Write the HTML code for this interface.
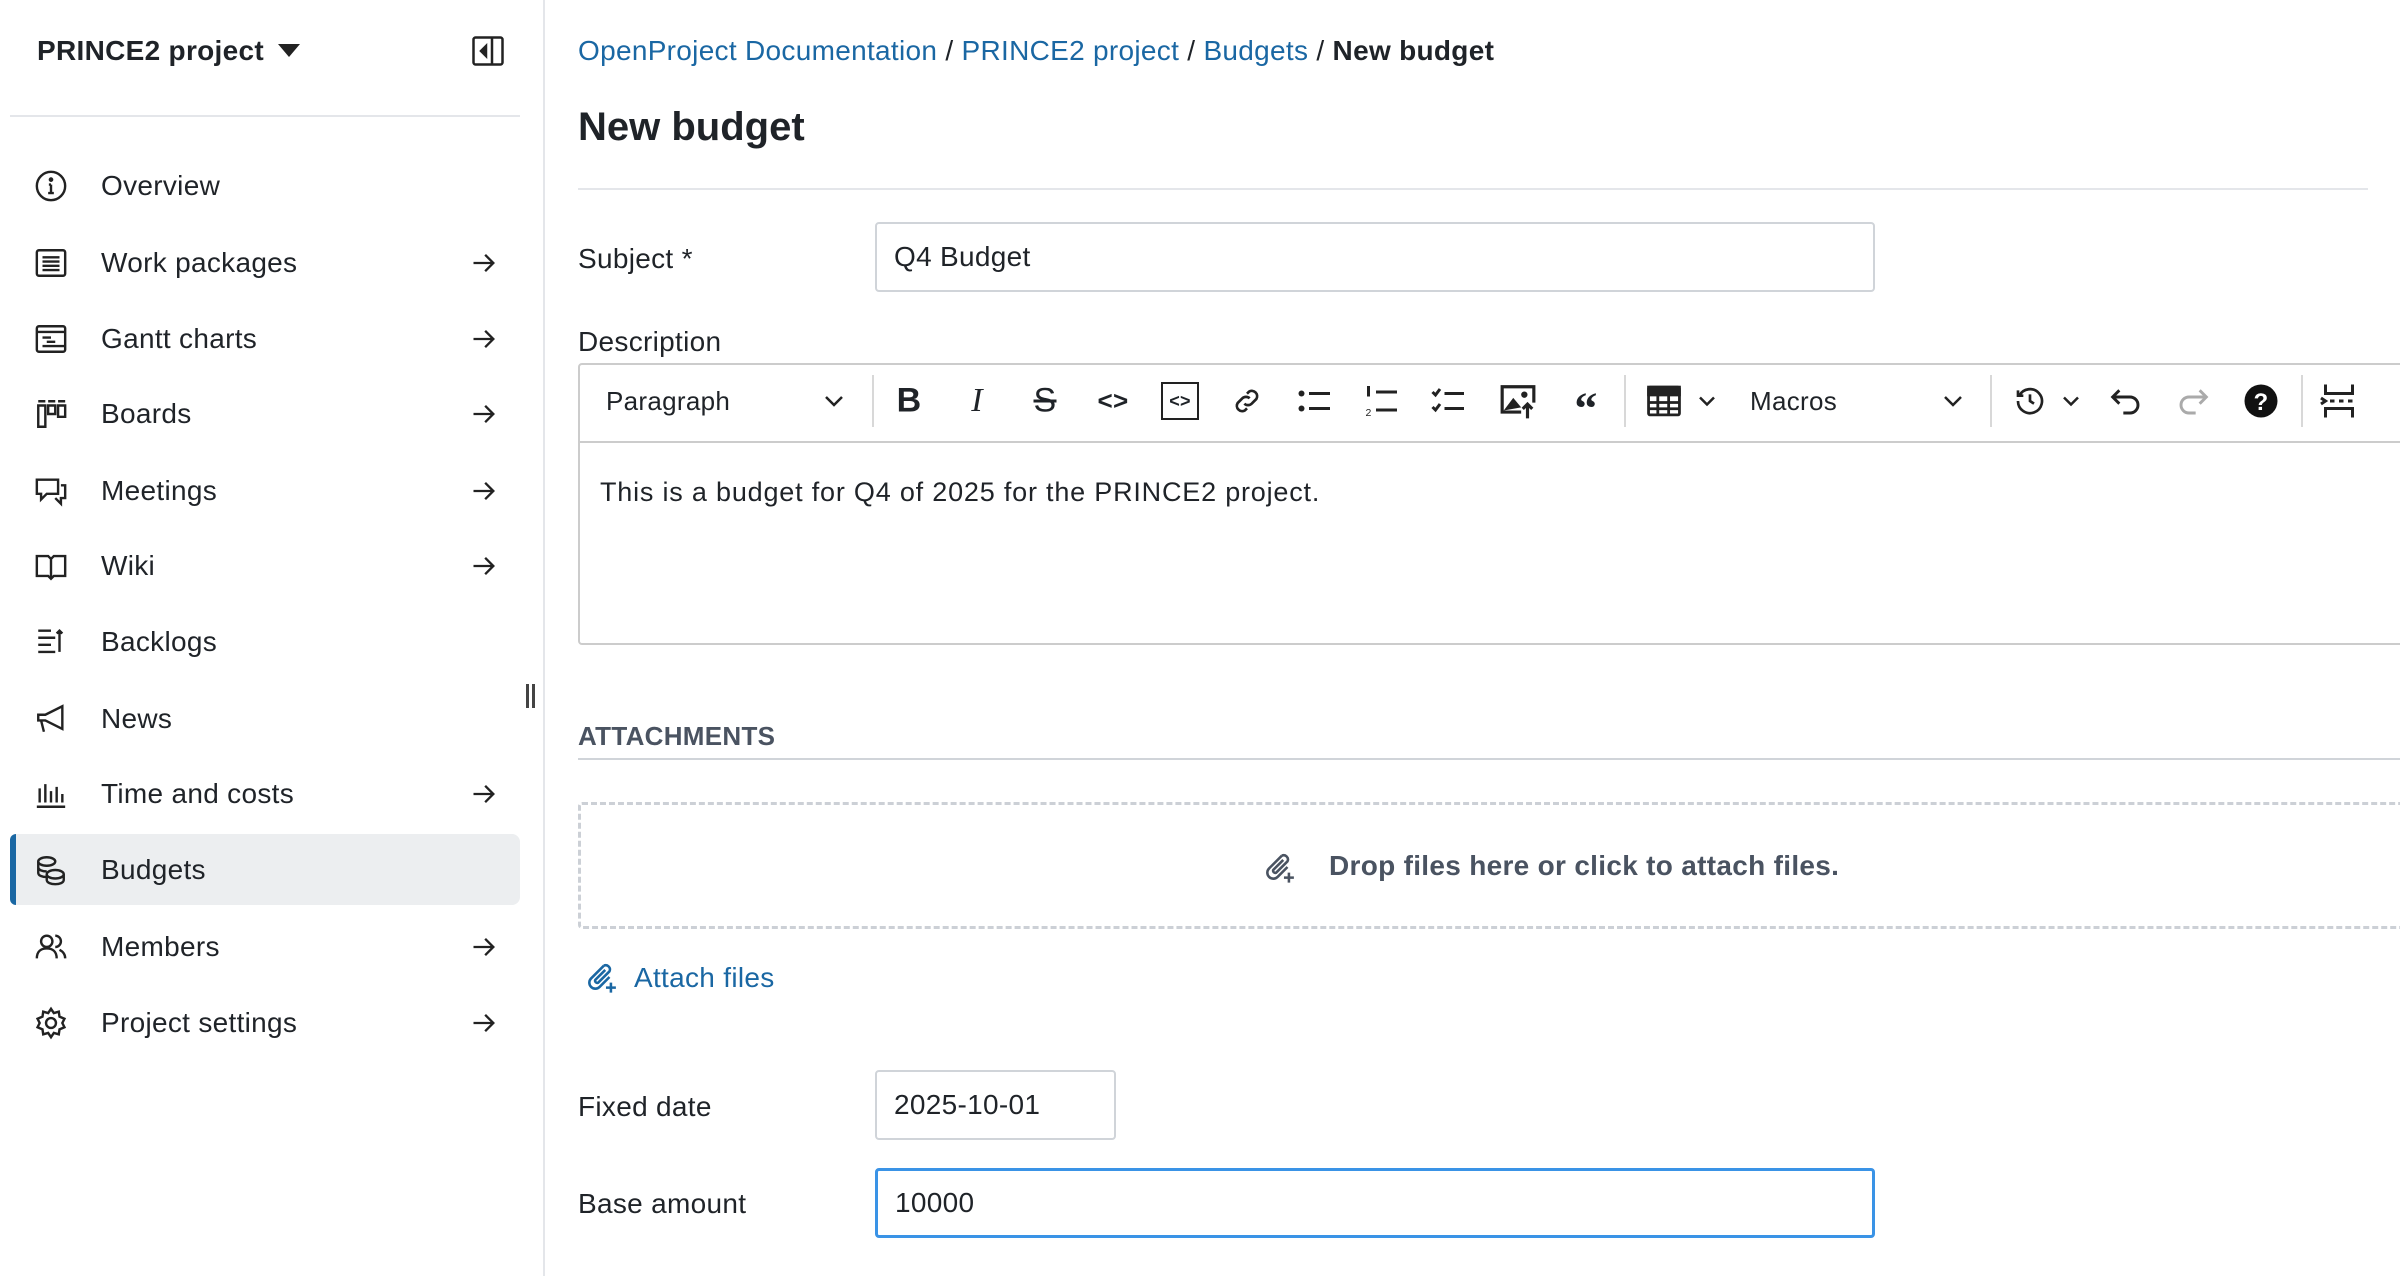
<!DOCTYPE html>
<html><head><meta charset="utf-8"><style>
*{box-sizing:border-box;margin:0;padding:0}
body{width:2400px;height:1276px;background:#fff;font-family:"Liberation Sans",Arial,sans-serif;color:#1f2328;position:relative;overflow:hidden;font-size:28px;letter-spacing:0.3px}
.a{position:absolute}
.side{left:0;top:0;width:545px;height:1276px;border-right:2px solid #e4e6ea}
.mi{position:absolute;left:10px;width:510px;height:72px;display:flex;align-items:center}
.mi svg.ic{position:absolute;left:24px;width:34px;height:34px}
.mi span{position:absolute;left:91px;font-size:28px;color:#1f2328}
.mi .ar{position:absolute;left:460px;width:28px;height:28px}
.lnk{color:#1a67a3}
.lbl{position:absolute;left:578px;font-size:28px;transform:translateY(-50%)}
.inp{position:absolute;border:2px solid #d0d4d9;border-radius:4px;font-size:28px;padding-left:17px;display:flex;align-items:center}
.tb{position:absolute;top:401px;transform:translate(-50%,-50%)}
.sep{position:absolute;top:375px;width:2px;height:52px;background:#d8d8d8}
</style></head><body>
<div class="a side">
 <div class="a" style="left:37px;top:35px;font-size:28px;font-weight:bold">PRINCE2 project</div>
 <svg class="a" style="left:278px;top:44px" width="22" height="13"><path d="M0 0H22L11 13Z" fill="#222"/></svg>
 <svg class="a" style="left:472px;top:36px" width="32" height="32" fill="none" stroke="#222" stroke-width="2.5"><rect x="1.5" y="1.5" width="29" height="27" rx="2"/><path d="M20 2V29"/><path d="M14 10L9 15L14 20Z" fill="#222"/></svg>
 <div class="a" style="left:10px;top:115px;width:510px;height:2px;background:#e4e6ea"></div>
 <div class="a" style="left:10px;top:834px;width:510px;height:71px;background:#eceef0;border-radius:8px"></div>
 <div class="a" style="left:10px;top:834px;width:6px;height:71px;background:#1a67a3;border-radius:6px 0 0 6px"></div>
 <div class="a" style="left:526px;top:684px;width:3px;height:24px;background:#444"></div>
 <div class="a" style="left:532px;top:684px;width:3px;height:24px;background:#444"></div>
</div>

<div class="mi" style="top:150px"><svg class="ic" viewBox="0 0 24 24" fill="none" stroke="#222" stroke-width="1.7"><circle cx="12" cy="12" r="10"/><path d="M12 11V17M10 17H14M10.5 11H12"/><circle cx="12" cy="7.5" r=".8" fill="#222"/></svg><span>Overview</span></div>
<div class="mi" style="top:227px"><svg class="ic" viewBox="0 0 24 24" fill="none" stroke="#222" stroke-width="1.7"><rect x="2" y="3" width="20" height="18" rx="1.5"/><path d="M6 8H18M6 11H18M6 14H18M6 17H18"/></svg><span>Work packages</span><svg class="ar" viewBox="0 0 24 24" fill="none" stroke="#222" stroke-width="2"><path d="M3 12H20M13 5L20 12L13 19"/></svg></div>
<div class="mi" style="top:303px"><svg class="ic" viewBox="0 0 24 24" fill="none" stroke="#222" stroke-width="1.7"><rect x="2" y="3" width="20" height="18" rx="1.5"/><path d="M2 7H22M6 11H12M9 14H15M6 17H22"/></svg><span>Gantt charts</span><svg class="ar" viewBox="0 0 24 24" fill="none" stroke="#222" stroke-width="2"><path d="M3 12H20M13 5L20 12L13 19"/></svg></div>
<div class="mi" style="top:378px"><svg class="ic" viewBox="0 0 24 24" fill="none" stroke="#222" stroke-width="1.7"><path d="M3 3H8M3 6H8V21H3ZM10 3H15M10 6H15V12H10ZM17 3H22M17 6H22V14H17Z"/></svg><span>Boards</span><svg class="ar" viewBox="0 0 24 24" fill="none" stroke="#222" stroke-width="2"><path d="M3 12H20M13 5L20 12L13 19"/></svg></div>
<div class="mi" style="top:455px"><svg class="ic" viewBox="0 0 24 24" fill="none" stroke="#222" stroke-width="1.7"><path d="M2 4H17V14H9L5 18V14H2Z"/><path d="M19 8H22V17H19V21L15 17"/></svg><span>Meetings</span><svg class="ar" viewBox="0 0 24 24" fill="none" stroke="#222" stroke-width="2"><path d="M3 12H20M13 5L20 12L13 19"/></svg></div>
<div class="mi" style="top:530px"><svg class="ic" viewBox="0 0 24 24" fill="none" stroke="#222" stroke-width="1.7"><path d="M2 5H10L12 7L14 5H22V19H14L12 21L10 19H2Z M12 7V21"/></svg><span>Wiki</span><svg class="ar" viewBox="0 0 24 24" fill="none" stroke="#222" stroke-width="2"><path d="M3 12H20M13 5L20 12L13 19"/></svg></div>
<div class="mi" style="top:606px"><svg class="ic" viewBox="0 0 24 24" fill="none" stroke="#222" stroke-width="1.7"><path d="M3 4H12M3 9H15M3 14H12M3 19H15M18 4V19M16 6L18 4L20 6"/></svg><span>Backlogs</span></div>
<div class="mi" style="top:683px"><svg class="ic" viewBox="0 0 24 24" fill="none" stroke="#222" stroke-width="1.7"><path d="M3 9H8L20 3V19L8 13H3ZM5 13L7 21"/></svg><span>News</span></div>
<div class="mi" style="top:758px"><svg class="ic" viewBox="0 0 24 24" fill="none" stroke="#222" stroke-width="1.7"><path d="M2 21H22M4 18V8M8 18V5M12 18V10M16 18V7M20 18V12"/></svg><span>Time and costs</span><svg class="ar" viewBox="0 0 24 24" fill="none" stroke="#222" stroke-width="2"><path d="M3 12H20M13 5L20 12L13 19"/></svg></div>
<div class="mi" style="top:834px"><svg class="ic" viewBox="0 0 24 24" fill="none" stroke="#222" stroke-width="1.7"><ellipse cx="9" cy="6" rx="6" ry="3"/><path d="M3 6V14C3 16 6 17 9 17M3 10C3 12 6 13 9 13"/><ellipse cx="15" cy="15" rx="6" ry="3"/><path d="M9 15V19C9 21 12 22 15 22S21 21 21 19V15"/></svg><span>Budgets</span></div>
<div class="mi" style="top:911px"><svg class="ic" viewBox="0 0 24 24" fill="none" stroke="#222" stroke-width="1.7"><circle cx="9" cy="8" r="4"/><path d="M2 20C2 15 5 13 9 13S16 15 16 20M15 4A4 4 0 0 1 15 12M18 14C20 15 22 17 22 20"/></svg><span>Members</span><svg class="ar" viewBox="0 0 24 24" fill="none" stroke="#222" stroke-width="2"><path d="M3 12H20M13 5L20 12L13 19"/></svg></div>
<div class="mi" style="top:987px"><svg class="ic" viewBox="0 0 24 24" fill="none" stroke="#222" stroke-width="1.7"><circle cx="12" cy="12" r="3.5"/><path d="M12 2L14 5L17.5 4L18 7.5L21.5 9L20 12L21.5 15L18 16.5L17.5 20L14 19L12 22L10 19L6.5 20L6 16.5L2.5 15L4 12L2.5 9L6 7.5L6.5 4L10 5Z"/></svg><span>Project settings</span><svg class="ar" viewBox="0 0 24 24" fill="none" stroke="#222" stroke-width="2"><path d="M3 12H20M13 5L20 12L13 19"/></svg></div>

<div class="a" style="left:578px;top:35px;font-size:28px"><span class="lnk">OpenProject Documentation</span> / <span class="lnk">PRINCE2 project</span> / <span class="lnk">Budgets</span> / <b>New budget</b></div>
<div class="a" style="left:578px;top:105px;font-size:40px;font-weight:bold;letter-spacing:0">New budget</div>
<div class="a" style="left:578px;top:188px;width:1790px;height:2px;background:#e4e6ea"></div>

<div class="lbl" style="top:259px">Subject *</div>
<div class="inp" style="left:875px;top:222px;width:1000px;height:70px">Q4 Budget</div>

<div class="lbl" style="top:342px">Description</div>
<div class="a" style="left:578px;top:363px;width:1840px;height:282px;border:2px solid #ccc;border-radius:4px"></div>
<div class="a" style="left:580px;top:441px;width:1830px;height:2px;background:#ccc"></div>
<div class="a" style="left:606px;top:386px;font-size:26px">Paragraph</div>
<svg class="tb" style="left:834px" width="20" height="12" fill="none" stroke="#222" stroke-width="2.5"><path d="M2 2L10 10L18 2"/></svg>
<div class="sep" style="left:872px"></div>
<div class="tb" style="left:909px;font-size:34px;font-weight:bold">B</div>
<div class="tb" style="left:977px;font-size:34px;font-style:italic;font-family:'Liberation Serif',serif">I</div>
<div class="tb" style="left:1045px;font-size:34px;text-decoration:line-through">S</div>
<div class="tb" style="left:1113px;font-size:26px;font-weight:bold">&lt;&gt;</div>
<div class="tb" style="left:1180px;width:38px;height:38px;border:2px solid #222;font-size:18px;font-weight:bold;text-align:center;line-height:34px">&lt;&gt;</div>
<svg class="tb" style="left:1247px" width="32" height="32" viewBox="0 0 24 24" fill="none" stroke="#222" stroke-width="2"><path d="M10 14A4 4 0 0 0 15.5 14L19 10.5A4 4 0 0 0 13.5 5L12 6.5M14 10A4 4 0 0 0 8.5 10L5 13.5A4 4 0 0 0 10.5 19L12 17.5"/></svg>
<svg class="tb" style="left:1315px" width="36" height="30" viewBox="0 0 24 20" fill="#222"><circle cx="3" cy="5" r="2"/><circle cx="3" cy="15" r="2"/><rect x="8" y="4" width="14" height="2"/><rect x="8" y="14" width="14" height="2"/></svg>
<svg class="tb" style="left:1382px" width="36" height="34" viewBox="0 0 24 22" fill="#222"><rect x="8" y="4" width="14" height="2"/><rect x="8" y="16" width="14" height="2"/><rect x="2" y="1" width="2" height="7"/><text x="1" y="21" font-size="7">2</text></svg>
<svg class="tb" style="left:1449px" width="36" height="30" viewBox="0 0 24 20" fill="none" stroke="#222" stroke-width="2"><path d="M1 4L3 6L6 2M1 14L3 16L6 12M9 5H22M9 15H22"/></svg>
<svg class="tb" style="left:1518px" width="38" height="36" viewBox="0 0 24 22" fill="#222"><path d="M1 1H23V12H21V3H3V17H14V19H1Z"/><path d="M3 17L9 9L14 15Z"/><circle cx="16" cy="7" r="2"/><path d="M18 22V13M15 16L18 13L21 16" stroke="#222" stroke-width="2" fill="none"/></svg>
<div class="tb" style="left:1586px;top:408px;font-size:46px;font-weight:bold;font-family:'Liberation Serif',serif">“</div>
<div class="sep" style="left:1624px"></div>
<svg class="tb" style="left:1664px" width="34" height="32" viewBox="0 0 22 20" fill="none" stroke="#222" stroke-width="1.8"><rect x="1" y="1" width="20" height="18" rx="1"/><path d="M1 6H21M1 11H21M1 15H21M7 6V19M14 6V19"/><rect x="1" y="1" width="20" height="5" fill="#222"/></svg>
<svg class="tb" style="left:1707px" width="18" height="11" fill="none" stroke="#222" stroke-width="2.5"><path d="M2 2L9 9L16 2"/></svg>
<div class="a" style="left:1750px;top:386px;font-size:26px">Macros</div>
<svg class="tb" style="left:1953px" width="20" height="12" fill="none" stroke="#222" stroke-width="2.5"><path d="M2 2L10 10L18 2"/></svg>
<div class="sep" style="left:1990px"></div>
<svg class="tb" style="left:2030px" width="32" height="32" viewBox="0 0 24 24" fill="none" stroke="#222" stroke-width="2"><path d="M4 8A9 9 0 1 1 3 12M3 4V8H7M12 7V12L15 14"/></svg>
<svg class="tb" style="left:2071px" width="18" height="11" fill="none" stroke="#222" stroke-width="2.5"><path d="M2 2L9 9L16 2"/></svg>
<svg class="tb" style="left:2126px" width="32" height="28" viewBox="0 0 24 20" fill="none" stroke="#222" stroke-width="2.2"><path d="M7 2L2 7L7 12M2 7H15A6 6 0 0 1 15 19H10"/></svg>
<svg class="tb" style="left:2193px" width="32" height="28" viewBox="0 0 24 20" fill="none" stroke="#aaa" stroke-width="2.2"><path d="M17 2L22 7L17 12M22 7H9A6 6 0 0 0 9 19H14"/></svg>
<svg class="tb" style="left:2261px" width="36" height="36" viewBox="0 0 24 24"><circle cx="12" cy="12" r="11" fill="#111"/><text x="12" y="18" font-size="16" font-weight="bold" fill="#fff" text-anchor="middle" font-family="Liberation Sans">?</text></svg>
<div class="sep" style="left:2301px"></div>
<svg class="tb" style="left:2339px" width="40" height="36" viewBox="0 0 26 24" fill="none" stroke="#222" stroke-width="2"><path d="M4 1V7H22V1M4 23V17H22V23M1 10L4 12L1 14M7 12H10M13 12H16M19 12H22"/></svg>
<div class="a" style="left:600px;top:477px;font-size:27px;letter-spacing:0.8px">This is a budget for Q4 of 2025 for the PRINCE2 project.</div>

<div class="a" style="left:578px;top:721px;font-size:26px;font-weight:bold;color:#4a5361">ATTACHMENTS</div>
<div class="a" style="left:578px;top:758px;width:1830px;height:2px;background:#d0d4d9"></div>
<div class="a" style="left:578px;top:802px;width:1840px;height:127px;border:3px dashed #ccd0d6;border-radius:4px"></div>
<svg class="a" style="left:1262px;top:850px" width="34" height="34" viewBox="0 0 24 24" fill="none" stroke="#4a5361" stroke-width="1.8"><path d="M14 4L5 13A4 4 0 0 0 11 19L18 12M14 4A3 3 0 0 1 18 8L10 16A1.5 1.5 0 0 1 8 14L15 7M19 16V23M15.5 19.5H22.5"/></svg>
<div class="a" style="left:1329px;top:850px;font-size:28px;font-weight:bold;color:#4a5361">Drop files here or click to attach files.</div>
<svg class="a" style="left:584px;top:960px" width="34" height="34" viewBox="0 0 24 24" fill="none" stroke="#1a67a3" stroke-width="1.8"><path d="M14 4L5 13A4 4 0 0 0 11 19L18 12M14 4A3 3 0 0 1 18 8L10 16A1.5 1.5 0 0 1 8 14L15 7M19 16V23M15.5 19.5H22.5"/></svg>
<div class="a lnk" style="left:634px;top:962px;font-size:28px">Attach files</div>

<div class="lbl" style="top:1107px">Fixed date</div>
<div class="inp" style="left:875px;top:1070px;width:241px;height:70px">2025-10-01</div>
<div class="lbl" style="top:1204px">Base amount</div>
<div class="inp" style="left:875px;top:1168px;width:1000px;height:70px;border:3px solid #3a93e6">10000</div>
</body></html>
